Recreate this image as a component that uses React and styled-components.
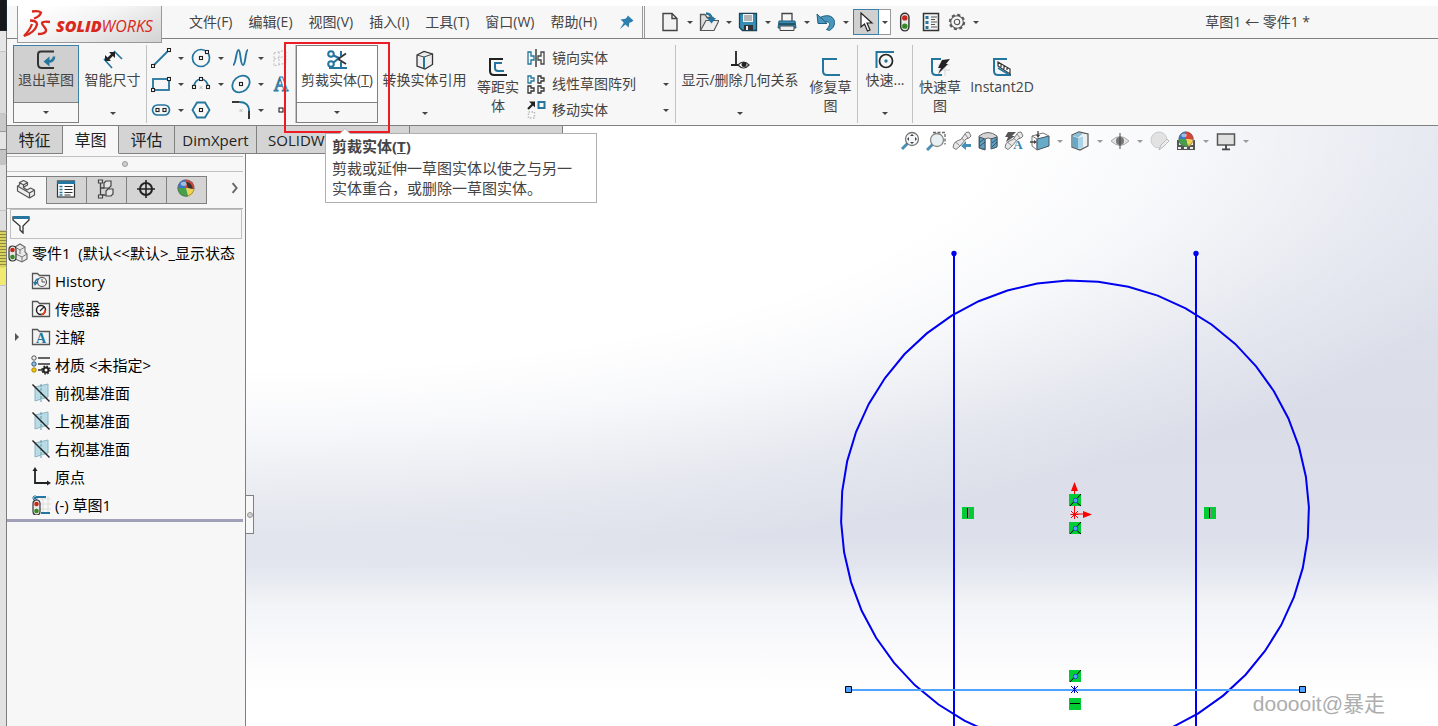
import styled, { createGlobalStyle, css } from 'styled-components';

const GlobalStyle = createGlobalStyle`
    * { box-sizing: border-box; }
    body {
        margin: 0;
        overflow: hidden;
        font-family: "Open Sans", "Noto Sans CJK SC", sans-serif;
        font-size: 14px;
        line-height: 20px;
        color: #444;
    }
    button {
        font: inherit;
        color: inherit;
        background: none;
        border: none;
        padding: 0;
        margin: 0;
        white-space: nowrap;
    }
    svg { display: block; flex: none; }
`;

const BLUE = '#24769f';
const DARK = '#333';

/* ---------- frame ---------- */

const Screen = styled.div`
    display: flex;
    height: 100vh;
    background: #fff;
`;

const Behind = styled.div`
    flex: none;
    display: flex;
    flex-direction: column;
    width: 7px;
    background: #dedede;
    overflow: hidden;
`;

const Slice = styled.div`
    flex: none;
    height: ${p => p.$h}px;
    background: ${p => p.$bg};
    border-right: 1px solid ${p => p.$edge || '#7d7d7d'};
    border-bottom: 1px solid ${p => p.$line || '#c4c4c4'};
`;

const Rest = styled.div`
    flex: 1;
    background: #e2e2e2;
    border-right: 1px solid #7d7d7d;
`;

const Window = styled.div`
    flex: 1;
    min-width: 0;
    display: flex;
    flex-direction: column;
    padding-top: 6px;
`;

/* ---------- menu bar ---------- */

const MenuBar = styled.header`
    flex: none;
    display: flex;
    align-items: center;
    height: 33px;
    padding-left: 10px;
    background: #f7f7f7;
    border-bottom: 1px solid #808080;
`;

const Logo = styled.div`
    position: relative;
    z-index: 2;
    align-self: flex-start;
    display: flex;
    align-items: center;
    gap: 5px;
    flex: none;
    width: 145px;
    height: 37px;
    padding-left: 5px;
    background: linear-gradient(160deg, #fff 10%, #f4f4f4 45%, #d2d2d2 100%);
    border: 1px solid #999;
    border-top: none;
    color: #d9291c;
    font-family: "Open Sans", sans-serif;
    font-size: 16px;
    font-style: italic;
    line-height: 20px;
    b { font-weight: 800; }
    span { padding-top: 4px; }
`;

const Menus = styled.nav`
    display: flex;
    gap: 16px;
    padding-left: 27px;
`;

const MenuItem = styled.button`
    line-height: 24px;
`;

const PinButton = styled.button`
    margin-left: 22px;
`;

const QuickTools = styled.div`
    display: flex;
    align-items: center;
    align-self: stretch;
    margin-left: 7px;
    padding-left: 13px;
    border-left: 3px double #999;
`;

const IconButton = styled.button`
    display: flex;
    align-items: center;
    justify-content: center;
    width: ${p => p.$w || 24}px;
    height: 26px;
`;

const Drop = styled.button`
    display: flex;
    align-items: center;
    justify-content: center;
    width: ${p => p.$w || 15}px;
    height: 26px;
    &::after {
        content: "";
        border: 3px solid transparent;
        border-top-color: ${p => p.$light ? '#999' : '#444'};
        border-bottom: none;
    }
`;

const SelectGroup = styled.div`
    display: flex;
    ${IconButton} { background: #d0d0d0; border: 1px solid #3a80a8; }
    ${Drop} { background: #fff; border: 1px solid #999; border-left: none; }
`;

const DocTitle = styled.div`
    margin-left: auto;
    padding-right: 128px;
    white-space: nowrap;
`;

/* ---------- ribbon ---------- */

const Ribbon = styled.div`
    position: relative;
    z-index: 1;
    flex: none;
    display: flex;
    height: 87px;
    padding: 6px 0 2px 6px;
    background: #f7f7f7;
    border-bottom: 1px solid #808080;
`;

const Rule = styled.div`
    flex: none;
    width: 1px;
    background: #c2c2c2;
`;

const BigButton = styled.button`
    flex: 1;
    display: flex;
    flex-direction: column;
    align-items: center;
    justify-content: flex-start;
    padding-top: ${p => p.$tall ? 12 : 5}px;
    line-height: 19px;
    white-space: normal;
    span { white-space: ${p => p.$tall ? 'normal' : 'nowrap'}; }
`;

const BigTool = styled.div`
    position: relative;
    flex: none;
    display: flex;
    flex-direction: column;
    width: ${p => p.$w}px;
    height: 78px;
    ${p => p.$framed && css`
        border: 1px solid #808080;
        > ${BigButton} {
            padding-top: 4px;
            background: #fff;
        }
    `}
    ${p => p.$pressed && css`
        > ${BigButton} {
            background: #d0d0d0;
            box-shadow: 0 0 0 1px #3a80a8;
        }
    `}
`;

const WrapLabel = styled.span`
    width: ${p => p.$w || 46}px;
    padding: 0 2px;
    text-align: center;
`;

const BigDrop = styled(Drop)`
    width: 100%;
    height: 20px;
    ${p => p.$line && css`border-top: 1px solid #808080;`}
`;

const ToolGrid = styled.div`
    flex: none;
    display: grid;
    grid-template-columns: 40px 40px 40px 26px;
    grid-auto-rows: 26px;
    padding-left: 2px;
`;

const Cell = styled.div`
    display: flex;
`;

const ListTools = styled.div`
    flex: none;
    width: 150px;
`;

const ListRow = styled.div`
    display: flex;
    justify-content: space-between;
    height: 26px;
    padding-right: 2px;
`;

const ListButton = styled.button`
    display: flex;
    align-items: center;
    gap: 6px;
    padding-left: 1px;
`;

const RedMark = styled.div`
    position: absolute;
    z-index: 3;
    left: -13px;
    top: -4px;
    width: 106px;
    height: 91px;
    border: 2px solid #ee1c25;
    pointer-events: none;
`;

const Tooltip = styled.div`
    position: absolute;
    z-index: 4;
    left: 28px;
    top: 87px;
    width: 272px;
    height: 70px;
    padding: 2px 20px 2px 6px;
    background: #fff;
    border: 1px solid #b0b0b0;
    font-size: 15px;
    line-height: 20px;
    h2 {
        margin: 0 0 1px;
        font-size: 15px;
        line-height: 21px;
    }
    p { margin: 0; }
    &::before {
        content: "";
        position: absolute;
        left: 13px;
        top: -6px;
        border: 6px solid transparent;
        border-top: none;
        border-bottom-color: #b8b8b8;
    }
    &::after {
        content: "";
        position: absolute;
        left: 14px;
        top: -5px;
        border: 5px solid transparent;
        border-top: none;
        border-bottom-color: #fff;
    }
`;

/* ---------- workspace ---------- */

const Workspace = styled.main`
    flex: 1;
    min-height: 0;
    display: flex;
    flex-direction: column;
    background:
        radial-gradient(ellipse 94% 74% at 17% 0%, #fff 0%, #fff 55%, rgba(255,255,255,0.8) 68%, rgba(255,255,255,0.3) 86%, rgba(255,255,255,0) 100%),
        linear-gradient(to bottom, #dee2ec 0%, #dadde8 50%, #dde0ea 68%, #e2e5ee 73%, #f2f4f7 80%, #fafafc 87%, #fff 95%);
`;

const TopRow = styled.div`
    flex: none;
    display: flex;
    justify-content: space-between;
    height: 28px;
`;

const Tabs = styled.div`
    display: flex;
`;

const Tab = styled.button`
    width: ${p => p.$w}px;
    overflow: hidden;
    padding: ${p => p.$left ? '0 0 0 11px' : 0};
    text-align: ${p => p.$left ? 'left' : 'center'};
    font-size: ${p => p.$latin ? 15 : 16}px;
    color: #222;
    background: ${p => p.$on ? '#f7f7f7' : '#d4d4d4'};
    border-right: 1px solid #808080;
    border-bottom: 1px solid ${p => p.$on ? '#f7f7f7' : '#808080'};
`;

const ViewTools = styled.div`
    display: flex;
    align-items: center;
    padding: 2px 185px 0 0;
`;

const Body = styled.div`
    flex: 1;
    min-height: 0;
    display: flex;
`;

const Side = styled.aside`
    flex: none;
    display: flex;
    flex-direction: column;
    width: 239px;
    padding-right: 2px;
    background: #f7f7f7;
    border-right: 1px solid #808080;
`;

const Grip = styled.div`
    display: flex;
    align-items: center;
    justify-content: center;
    height: 16px;
    margin: 2px 0 4px;
    border: solid #c0c0c0;
    border-width: 1px 0;
`;

const Dot = styled.i`
    width: 6px;
    height: 6px;
    border-radius: 50%;
    border: 1px solid #999;
    background: #d0d0d0;
`;

const PanelTabs = styled.div`
    display: flex;
    height: 33px;
    border-bottom: 1px solid #b0b0b0;
`;

const PanelTab = styled.button`
    display: flex;
    align-items: center;
    justify-content: center;
    width: 40px;
    height: 28px;
    padding: 0 2px 3px 0;
    background: ${p => p.$on ? 'none' : '#d4d4d4'};
    border: ${p => p.$on ? 'none' : '1px solid #808080'};
    border-left: none;
    border-top: 1px solid #808080;
    ${p => p.$on && css`border-right: 1px solid #808080;`}
`;

const More = styled.button`
    margin-left: auto;
    align-self: flex-start;
    height: 24px;
`;

const Filter = styled.label`
    display: flex;
    align-items: center;
    height: 30px;
    margin: 0 1px 0 3px;
    border: 1px solid #c0c0c0;
    input {
        flex: 1;
        min-width: 0;
        height: 26px;
        border: none;
        outline: none;
        background: none;
    }
`;

const Tree = styled.ul`
    list-style: none;
    margin: 0;
    overflow: hidden;
    padding: 0;
    border-bottom: 3px solid #9f9fb8;
`;

const Node = styled.li`
    display: flex;
    align-items: center;
    height: 28px;
    padding-left: ${p => p.$root ? 1 : 24}px;
    gap: 4px;
    font-size: 15px;
    color: #000;
    white-space: pre;
`;

const Expander = styled.button`
    width: 16px;
    height: 20px;
    margin-left: -20px;
    &::after {
        content: "";
        display: block;
        width: 0;
        margin-left: 4px;
        border: 4px solid transparent;
        border-left-color: #555;
        border-right: none;
    }
`;

const SideHandle = styled.button`
    flex: none;
    align-self: flex-start;
    display: flex;
    align-items: center;
    justify-content: center;
    width: 8px;
    height: 39px;
    margin-top: 341px;
    background: #f7f7f7;
    border: 1px solid #808080;
    border-left: none;
`;

const Canvas = styled.section`
    position: relative;
    flex: 1;
    min-width: 0;
    display: flex;
    justify-content: flex-end;
    padding-right: 108px;
    overflow: hidden;
`;

const Watermark = styled.div`
    position: absolute;
    right: 53px;
    bottom: 8px;
    font-family: "Liberation Sans", "Noto Sans CJK SC", sans-serif;
    font-size: 21px;
    line-height: 28px;
    color: #adadad;
`;

/* ---------- icons ---------- */

const Sq = ({ x, y, s = 3 }) => <rect x={x - s / 2} y={y - s / 2} width={s} height={s} fill="#fff" stroke="#222" strokeWidth="1.1" />;

const Folder = () => <path d="M1.5 17.5v-15h5l2 2h10v13z" fill="#f2f2f2" stroke="#555" strokeWidth="1.3" />;

const Light = ({ x = 0, y = 0 }) => (
    <g transform={`translate(${x} ${y})`}>
        <rect x="1" y="1" width="7" height="15" rx="3.5" fill="#e9e9e9" stroke="#333" strokeWidth="1.2" />
        <circle cx="4.5" cy="5" r="2.3" fill="#c8281c" />
        <circle cx="4.5" cy="12" r="2.3" fill="#358a24" />
    </g>
);

const Ball = ({ cx = 10, cy = 9, r = 8 }) => (
    <g transform={`translate(${cx} ${cy}) scale(${r / 8})`}>
        <path d="M0 0V-8A8 8 0 0 0-8 0Z" fill="#3d78c4" />
        <path d="M0 0V-8A8 8 0 0 1 8 1Z" fill="#d8433a" />
        <path d="M0 0L8 1A8 8 0 0 1 2 8Z" fill="#f2d34f" />
        <path d="M0 0L2 8A8 8 0 0 1-8 0Z" fill="#45a049" />
        <ellipse cx="-2" cy="-4" rx="3" ry="2" fill="#fff" opacity=".5" />
        <circle r="7.6" stroke="#666" strokeWidth=".6" />
    </g>
);

const Telescope = () => (
    <>
        <path d="M14 1.500l3-.5 2 4-2 2-3 1-6 7-4 3.500-3-2 1-4 4-3 3-1z" fill="#e8e8e8" stroke="#777" />
        <path d="M9 7l4 3M3.500 11l4 3.500M13 3l3 4" stroke="#888" />
    </>
);

const shapes = {
    exit: <><path d="M18 1.500H5q-3 0-3 3V14q0 4 4 4h12" stroke={DARK} strokeWidth="2" /><path d="M18 6.500q0 5-6 5" stroke={BLUE} strokeWidth="2.600" /><path d="M7.500 11.500l6-5v10z" fill={BLUE} /></>,
    smart: <><path d="M1 9l8 9M11 1l8 8M1 10l3-3" stroke={BLUE} strokeWidth="1.700" /><path d="M4 10l7-7" stroke="#222" strokeWidth="2.500" /><path d="M12 2v6L6 2zM2 11V5l6 6z" fill="#222" /></>,
    line: <><path d="M2 18L18 2" stroke={BLUE} strokeWidth="1.8" /><Sq x={2} y={18} /><Sq x={18} y={2} /></>,
    circle: <><circle cx="10" cy="10" r="8.500" stroke={BLUE} strokeWidth="1.7" /><Sq x={10} y={10} /><Sq x={16} y={4} /></>,
    spline: <path d="M2 17c3 0 3-15 5.500-15S9 17 12 17s2-15 5-15" stroke={BLUE} strokeWidth="1.9" />,
    plane: <path d="M3 5l12-3v13L3 18zM8 4v13M3 11l12-3" stroke="#bbb" strokeDasharray="2 1.500" />,
    rect: <><rect x="2" y="5" width="16" height="11" stroke={BLUE} strokeWidth="1.8" /><Sq x={2} y={16} /><Sq x={18} y={5} /></>,
    arc: <><path d="M3 13a7 8 0 0 1 14 0" stroke={BLUE} strokeWidth="1.7" /><Sq x={10} y={5} /><Sq x={3} y={13} /><Sq x={17} y={13} /><path d="M8.500 12l3 3m0-3l-3 3" stroke="#bbb" /></>,
    ellipse: <><ellipse cx="10" cy="10" rx="9.500" ry="7.500" transform="rotate(-42 10 10)" stroke={BLUE} strokeWidth="1.8" /><Sq x={10} y={10} /></>,
    text: <text x="10" y="17" textAnchor="middle" fontFamily="Liberation Serif, serif" fontWeight="bold" fontSize="20" fill="#fff" stroke={BLUE} strokeWidth="1">A</text>,
    slot: <><rect x="1.500" y="5" width="17" height="10" rx="5" stroke={BLUE} strokeWidth="1.7" /><Sq x={6.5} y={10} /><Sq x={13.5} y={10} /></>,
    polygon: <><path d="M1.500 10L6 2.500h8l4.500 7.500-4.500 7.500H6z" stroke={BLUE} strokeWidth="1.8" /><Sq x={10} y={10} /></>,
    fillet: <><path d="M1 2h7" stroke="#222" strokeWidth="1.8" /><path d="M8 2q10 0 10 9" stroke={BLUE} strokeWidth="1.8" /><path d="M18 11v8" stroke="#222" strokeWidth="1.8" /><path d="M8.500 9l3 3m0-3l-3 3" stroke="#bbb" /></>,
    point: <Sq x={10} y={10} s={4} />,
    trim: <><circle cx="4" cy="4" r="2.800" stroke={BLUE} strokeWidth="2" /><circle cx="4" cy="14" r="2.800" stroke={BLUE} strokeWidth="2" /><path d="M6.500 5.500L12 8l-5.500 4.500" stroke={BLUE} strokeWidth="2.200" /><path d="M11 9l8-5.500M11 9l8 5" stroke="#333" strokeWidth="1.800" /><path d="M14 1v5M14 12v5M2 18h18" stroke={BLUE} strokeWidth="2" /></>,
    convert: <><path d="M2 5l7-3.500L17.500 4v10.500L10 19l-8-3z" fill="#eee" stroke="#333" strokeWidth="1.3" /><path d="M2 5l7 2 8.500-3" stroke="#444" /><path d="M9 7v11" stroke={BLUE} strokeWidth="2" /></>,
    offset: <><path d="M15 2H2v12q0 4 4 4h13" stroke="#222" strokeWidth="2" /><path d="M14 6H7v5q0 3 3 3h6" stroke={BLUE} strokeWidth="2" /></>,
    mirror: <><path d="M10 1v18" stroke="#222" strokeWidth="1.3" /><path d="M2 4h3v4h3v4H5v4H2z" stroke={BLUE} strokeWidth="1.3" /><path d="M18 4h-3v4h-3v4h3v4h3z" stroke="#444" strokeWidth="1.3" /></>,
    pattern: <><path d="M2 2h3v2h3v3H5v2H2z" stroke={BLUE} strokeWidth="1.3" /><path d="M12 2h3v2h3v3h-3v2h-3zM2 12h3v2h3v3H5v2H2zM12 12h3v2h3v3h-3v2h-3z" stroke="#333" strokeWidth="1.3" /></>,
    move: <><path d="M2 9l5-5" stroke="#222" strokeWidth="2.200" /><path d="M3 1.500h6v6z" fill="#222" /><rect x="12.500" y="2" width="6" height="6" stroke={BLUE} strokeWidth="2" /><rect x="2.500" y="12" width="6" height="6" stroke="#bbb" strokeDasharray="1.500 1.500" strokeWidth="1.500" /></>,
    relations: <><path d="M6 1v14M1 15h8" stroke="#222" strokeWidth="1.8" /><path d="M8 15q5.500-6 11 0q-5.500 6-11 0z" fill="#fff" stroke="#333" strokeWidth="1.200" /><circle cx="14" cy="14.500" r="2.500" fill="#222" /></>,
    repair: <path d="M16 2H2v12q0 4 4 4h13" stroke={BLUE} strokeWidth="2" />,
    snap: <><path d="M1.500 18V2H19" stroke={BLUE} strokeWidth="2" /><circle cx="11" cy="11" r="6.500" stroke="#222" strokeWidth="1.7" /><circle cx="11" cy="11" r="1.700" fill={BLUE} /></>,
    rapid: <><path d="M8 8h12M8 13h12M10 8v11M15 8v11" stroke="#d5d5d5" /><path d="M11 2H2v12q0 4 4 4h6" stroke={BLUE} strokeWidth="2" /><path d="M12 3l8-1-4 5h2L8 17l3-6H8z" fill="#222" /></>,
    instant: <><path d="M15 2H2v12q0 4 4 4h13" stroke={BLUE} strokeWidth="2" /><path d="M6 5l12 7v5L6 9zM9 7v3M12 9v3M15 10v3" fill="#fff" stroke="#333" strokeWidth="1.200" /><path d="M6 11l10 6" stroke={BLUE} strokeWidth="1.500" /></>,
    file: <path d="M3 1.500h9l5 5v12H3zM12 1.500v5h5" fill="#f2f2f2" stroke="#444" strokeWidth="1.400" />,
    open: <><path d="M1.500 18V2.500H6l2 3h6v4" fill="#ddd" stroke="#555" strokeWidth="1.300" /><path d="M1.500 18.500L7 8.500h13l-5 10z" fill="#eee" stroke="#555" strokeWidth="1.200" /><path d="M7 1.500q5 0 5.500 5" stroke={BLUE} strokeWidth="2.500" /><path d="M8 6h9l-4.500 5.500z" fill={BLUE} /></>,
    save: <><path d="M1.500 1.500h17v17h-14l-3-3z" fill="#358eb5" stroke="#1d4358" strokeWidth="1.300" /><rect x="5" y="2" width="10" height="8" fill="#f2f2f2" /><path d="M6 4h8M6 6h8M6 8h8" stroke="#777" /><rect x="6" y="13" width="9" height="5" fill="#333" /><rect x="8" y="14" width="2" height="4" fill="#eee" /></>,
    print: <><path d="M5 9V1.500h10V9" fill="#f5f5f5" stroke="#444" strokeWidth="1.300" /><path d="M2 9h16l1 7H1z" fill="#358eb5" stroke="#235e7c" /><path d="M3 14h14v4.500H3z" fill="#eee" stroke="#444" /><path d="M2 12h16" stroke="#1d4358" strokeWidth="1.500" /></>,
    undo: <><path d="M4 5.500c8-4 14.500-1 14.500 5 0 4-2 6-5 8l-3-1c5-5 4-9-4-7.500z" fill="#4a97bd" stroke="#1f5f80" /><path d="M1 2l1 9.500h9L1 2z" fill="#4a97bd" stroke="#1f5f80" /></>,
    cursor: <path d="M5 1v14l3.500-3 3 7 2.500-1-3-7h5z" fill="#fff" stroke="#222" strokeWidth="1.200" />,
    light: <g transform="translate(4.500 0) scale(1.18)"><Light /></g>,
    options: <><rect x="2.500" y="1.500" width="15" height="17" fill="#f2f2f2" stroke="#333" strokeWidth="1.500" /><path d="M4.500 4h3v3h-3zM4.500 9h3v3h-3zM4.500 14h3v3h-3z" fill={BLUE} /><path d="M10 5h6M10 10h6M10 15h6M10 7.500h4M10 12.500h4" stroke="#555" /></>,
    gear: <><circle cx="10" cy="10" r="8" stroke="#555" strokeWidth="2.200" strokeDasharray="3.500 2.780" /><circle cx="10" cy="10" r="7" fill="#f7f7f7" stroke="#555" strokeWidth="1.200" /><circle cx="10" cy="10" r="3" stroke="#555" strokeWidth="1.200" /></>,
    pin: <path d="M11 2l7 6-2 2-3 1-1 6-4-4-7 6 5-8-4-4 6-1 2-2z" fill="#2c7fae" />,
    zoomFit: <><path d="M2 18l6-6" stroke="#4c8fb5" strokeWidth="3" /><circle cx="12" cy="8" r="6.500" fill="#f4f6f8" stroke="#777" strokeWidth="1.300" /><path d="M12 3l2 2h-4zM12 13l2-2h-4zM7 8l2-2v4zM17 8l-2-2v4z" fill="#444" /></>,
    zoomArea: <><path d="M7 1.500h12v12" stroke="#666" strokeDasharray="3 1.500" strokeWidth="1.300" /><path d="M1 19l6-6" stroke="#4c8fb5" strokeWidth="3" /><circle cx="11" cy="9" r="6.500" fill="#e8f0f2" stroke="#888" strokeWidth="1.300" /></>,
    previous: <><Telescope /><path d="M19 13h-5v-3l-5 5 5 4v-3h5z" fill="#4590b8" /></>,
    section: <><path d="M1 5q9-7 18 0v10q-3 3-5 2V8q-4-2-7 0v11l-6-2z" fill="#d5d5d5" stroke="#666" /><path d="M1.500 6L7 8v10.500L1.500 17zM13 8l6-2v10l-6 2z" fill="#5f9fc0" stroke="#456" /><path d="M2 11l4-3M2 15l5-4M14 12l5-4M14 16l5-5" stroke="#234" strokeWidth=".7" /></>,
    annot: <><Telescope /><path d="M4 1h8L8 5h3l-9 6 2-5H1z" fill="#555" /><text x="14" y="18" textAnchor="middle" fontFamily="Liberation Serif, serif" fontWeight="bold" fontSize="13" fill="#3b83ad">A</text></>,
    orient: <><path d="M7 8l12-3v10L7 19z" fill="#67abc9" stroke="#456" /><path d="M2 5l5 3v11l-5-4zM2 5l11-3 6 3" stroke="#777" /><path d="M8 0v5M0 11h5" stroke="#444" strokeWidth="1.300" /><path d="M6 4h4L8 7zM4 9v4l3-2z" fill="#444" /></>,
    display: <><path d="M2 4l7-3 9 2v12l-8 4-8-3z" fill="#eee" stroke="#555" strokeWidth="1.200" /><path d="M2.500 5L8 7v11l-5.500-2.500z" fill="#65a8c8" /><path d="M8 7l5-1.500v11L8 18z" fill="#aad4e6" /><path d="M2.500 4.500L9 1.500l4 1L8 6.500z" fill="#8bc1d8" /></>,
    eye: <><path d="M1 10q9-9 18 0q-9 9-18 0z" fill="#e2e2e2" stroke="#aaa" /><circle cx="10" cy="10" r="4" fill="#777" /><path d="M10 2v16" stroke="#444" /></>,
    appearance: <><circle cx="9" cy="9" r="8" fill="#e2e2e2" stroke="#ccc" /><path d="M9 19l2-5 6-6 2 2-6 6z" fill="#eee" stroke="#bbb" /></>,
    scene: <><rect x="1" y="9" width="18" height="10" fill="#555" /><path d="M3 11h3v3H3zM14 11h3v3h-3zM2 16h3v2H2zM8 16h3v2H8zM14 16h3v2h-3z" fill="#eee" /><Ball cx={10} cy={8} r={7.5} /></>,
    monitor: <><rect x="1.500" y="3" width="17" height="11" fill="#e0e0e0" stroke="#555" strokeWidth="1.500" /><path d="M10 14v4M6 18.300h8" stroke="#444" strokeWidth="1.800" /></>,
    part: <path d="M1.500 7v5l12 7 5-3v-5l-4-2-3.500 2-3-2V8l3.500-2V3.500L7.500 1.500l-4 2V6zM3.500 3.500l4 2.500 4-2.500M7.500 6v3M1.500 7l12 7 5-3M13.500 14v5" fill="#efefef" stroke="#555" strokeWidth="1.200" strokeLinejoin="round" />,
    property: <><rect x="1.500" y="2" width="17" height="16" fill="#fff" stroke="#333" strokeWidth="1.200" /><path d="M1 3.500h18" stroke={BLUE} strokeWidth="3" /><path d="M3.500 7.500h3M3.500 10.500h3M3.500 13.500h3M3.500 16h3" stroke={BLUE} strokeWidth="1.700" /><path d="M8.500 7.500h8M8.500 10.500h8M8.500 13.500h8M8.500 16h6" stroke="#333" /></>,
    config: <><path d="M4.500 2v16M4.500 9h4M4.500 16h5" stroke="#444" strokeWidth="1.300" /><path d="M2.500 1h4v3h-4zM2.500 16h4v3h-4zM8 4l2-2h5v5l-2 2H8zM10 12l2-2h5v5l-2 2h-5z" fill="#e5e5e5" stroke="#444" strokeWidth="1.200" /></>,
    target: <><circle cx="10" cy="10" r="6" stroke="#222" strokeWidth="2" /><path d="M10 1v18M1 10h18" stroke="#222" strokeWidth="1.600" /></>,
    ball: <><Ball r={8.5} /><path d="M10 3q5-1 7 7l-5-1z" fill="#333" /></>,
    filter: <><path d="M2 3h16v3l-6 6v7l-3-3v-4L2 6z" fill="#fff" stroke="#333" strokeWidth="1.300" /><path d="M2 3.500h16" stroke={BLUE} strokeWidth="3" /></>,
    root: <><path d="M7 4l5-3 5 3v5l2 2v5l-5 3-7-3z" fill="#eaeaea" stroke="#666" strokeWidth="1.100" /><path d="M7 4l5 3 5-3M12 7v4M8 11l6 3 5-3M14 14v5" stroke="#777" /><Light y={2} /></>,
    history: <><Folder /><circle cx="11" cy="11" r="4.500" stroke="#555" strokeWidth="1.200" /><path d="M11 8v3h3" stroke="#555" /><path d="M4 13q0-5 4-5" stroke={BLUE} strokeWidth="1.500" /><path d="M2 11h5l-3 4z" fill={BLUE} /></>,
    sensor: <><Folder /><circle cx="10" cy="11" r="4.500" fill="#fff" stroke="#222" strokeWidth="1.500" /><path d="M9 12l4-4" stroke="#222" strokeWidth="1.300" /><path d="M14 11q0 4-4 4.500" stroke="#e04a20" strokeWidth="2" /></>,
    note: <><Folder /><text x="10" y="16" textAnchor="middle" fontFamily="Liberation Serif, serif" fontWeight="bold" fontSize="14" fill={BLUE}>A</text></>,
    material: <><path d="M7 3h12M7 9h12M7 15h6" stroke="#333" strokeWidth="1.600" /><circle cx="3" cy="3" r="2.200" fill="#eee" stroke="#555" /><circle cx="3" cy="9" r="2.200" fill="#8cc8e4" stroke="#357" /><circle cx="3" cy="15" r="2.200" fill="#f4c30c" stroke="#a80" /><circle cx="15" cy="15" r="2.500" fill="#fff" stroke="#222" strokeWidth="2" /><circle cx="15" cy="15" r="4" stroke="#222" strokeWidth="1.300" strokeDasharray="1.600 1.540" /></>,
    datum: <><path d="M4 4l13-3v13L4 18z" fill="#b9dbe6" stroke="#8cb4c4" /><path d="M10 1v18" stroke="#69a" strokeDasharray="3 1" /><path d="M1.500 1.500l17 17" stroke="#222" strokeWidth="1.500" /></>,
    origin: <><path d="M4 3v13h13" stroke="#222" strokeWidth="1.800" /><path d="M4 0l2.500 4h-5zM20 16l-4-2.500v5z" fill="#222" /></>,
    sketch: <><path d="M9 4h11M9 9h11M9 14h11M12 1v18M17 1v18" stroke="#ddd" /><path d="M5 2h10M10 18h9" stroke={BLUE} strokeWidth="1.800" /><path d="M4 0v6M1 3h6M2 1l4 4M6 1l-4 4" stroke={BLUE} /><Light y={4} x={1} /></>,
    chevron: <path d="M7 4l5 6-5 6" stroke="#666" strokeWidth="2.400" />,
};

const Icon = ({ name, size = 20 }) => (
    <svg width={size} height={size} viewBox="0 0 20 20" fill="none" aria-hidden="true">{shapes[name]}</svg>
);

/* ---------- data ---------- */

const menus = ['文件(F)', '编辑(E)', '视图(V)', '插入(I)', '工具(T)', '窗口(W)', '帮助(H)'];
const fileTools = ['file', 'open', 'save', 'print', 'undo'];

const sketchTools = [
    ['line', true], ['circle', true], ['spline', true], ['plane', false],
    ['rect', true], ['arc', true], ['ellipse', true], ['text', false],
    ['slot', true], ['polygon', false], ['fillet', true], ['point', false],
];

const entityTools = [
    ['mirror', '镜向实体', false],
    ['pattern', '线性草图阵列', true],
    ['move', '移动实体', true],
];

const viewTools = [
    ['zoomFit', false], ['zoomArea', false], ['previous', false], ['section', false], ['annot', false],
    ['orient', true], ['display', true], ['eye', true], ['appearance', false], ['scene', true], ['monitor', true],
];

const nodes = [
    ['history', 'History'],
    ['sensor', '传感器'],
    ['note', '注解', true],
    ['material', '材质 <未指定>'],
    ['datum', '前视基准面'],
    ['datum', '上视基准面'],
    ['datum', '右视基准面'],
    ['origin', '原点'],
    ['sketch', '(-) 草图1'],
];

/* ---------- sketch drawing ---------- */

const SEGMENTS = 48;
const outline = Array.from({ length: SEGMENTS }, (_, i) => {
    const a = ((i * 360) / SEGMENTS - 1.8) * Math.PI / 180;
    return `${(1075 + 234 * Math.sin(a)).toFixed(1)},${(514.5 - 234 * Math.cos(a)).toFixed(1)}`;
}).join(' ');

const Relation = ({ x, y, kind }) => (
    <g transform={`translate(${x} ${y})`}>
        <rect width="12" height="12" fill="#00cc33" />
        {kind === 'v' && <path d="M5.500 1v10" stroke="#000" />}
        {kind === 'v' && <path d="M6.500 1v10" stroke="#888" />}
        {kind === 'h' && <path d="M1 5.500h10" stroke="#000" />}
        {kind === 'mid' && <path d="M1 12L12 0" stroke="#000" />}
        {kind === 'cross' && <path d="M1 12L12 0M6 7l6 5" stroke="#000" />}
        {(kind === 'mid' || kind === 'cross') && <circle cx="6.500" cy="6.500" r="2.300" fill="#4fa3ff" stroke="#1f50b8" />}
    </g>
);

const Sketch = () => (
    <svg width="500" height="572" viewBox="830 154 500 572" fill="none" overflow="visible">
        <polygon points={outline} stroke="#0000f0" strokeWidth="2" />
        <path d="M954 254v800M1196 254v800" stroke="#0000f0" strokeWidth="2" />
        <circle cx="954" cy="253.500" r="2.700" fill="#0000f0" />
        <circle cx="1196" cy="253.500" r="2.700" fill="#0000f0" />
        <path d="M849 690h453" stroke="#4fa3ff" strokeWidth="2" />
        <path d="M845.500 686.500h6v6h-6zM1299.500 686.500h6v6h-6z" fill="#4fa3ff" stroke="#000" />
        <path d="M1074.500 488v26h12" stroke="#f00" />
        <path d="M1074.500 482l3.500 9h-7zM1092 514.500l-9-3.500v7z" fill="#f00" />
        <path d="M1071 511l7 7M1078 511l-7 7M1070.500 514.500h8M1074.500 510v9" stroke="#f00" />
        <path d="M1071 686l7 7M1078 686l-7 7M1074.500 686v7" stroke="#0000c8" />
        <Relation x={962} y={507} kind="v" />
        <Relation x={1204} y={507} kind="v" />
        <Relation x={1069} y={494} kind="cross" />
        <Relation x={1069} y={522} kind="cross" />
        <Relation x={1069} y={670} kind="mid" />
        <Relation x={1069} y={698} kind="h" />
    </svg>
);

/* ---------- parts ---------- */

const TopMenu = () => (
    <MenuBar>
        <Logo>
            <svg width="28" height="28" viewBox="0 0 28 28" fill="none" stroke="#d9291c" strokeWidth="2.300">
                <path d="M9 1.500q7-1 9 1-1 4-7 6" />
                <path d="M7 10.500q7 0 7 4-2 8-13 11.500Q7 20 9 14" />
                <path d="M27 12q-7-1-8 1c0 3 5 5 4 8-1 2.500-3 3-8 3" />
            </svg>
            <span><b>SOLID</b>WORKS</span>
        </Logo>
        <Menus>
            {menus.map(m => <MenuItem key={m}>{m}</MenuItem>)}
        </Menus>
        <PinButton aria-label="固定"><Icon name="pin" size={16} /></PinButton>
        <QuickTools>
            {fileTools.map(t => (
                <Cell key={t}>
                    <IconButton aria-label={t}><Icon name={t} /></IconButton>
                    <Drop aria-label={`${t} menu`} />
                </Cell>
            ))}
            <SelectGroup>
                <IconButton $w={26} aria-label="select"><Icon name="cursor" /></IconButton>
                <Drop $w={12} aria-label="select menu" />
            </SelectGroup>
            <IconButton $w={27} aria-label="rebuild"><Icon name="light" /></IconButton>
            <IconButton $w={26} aria-label="properties"><Icon name="options" /></IconButton>
            <IconButton $w={26} aria-label="options"><Icon name="gear" size={18} /></IconButton>
            <Drop $w={12} aria-label="options menu" />
        </QuickTools>
        <DocTitle>草图1 ← 零件1 *</DocTitle>
    </MenuBar>
);

const Big = ({ icon, label, w, drop, tall, labelWidth, ...rest }) => (
    <BigTool $w={w} {...rest}>
        <BigButton $tall={tall}>
            <Icon name={icon} />
            {tall ? <WrapLabel $w={labelWidth}>{label}</WrapLabel> : <span>{label}</span>}
        </BigButton>
        {drop && <BigDrop $line={rest.$framed} aria-label={`${icon} menu`} />}
    </BigTool>
);

const SketchRibbon = () => (
    <Ribbon>
        <Big icon="exit" label="退出草图" w={66} drop $framed $pressed />
        <Big icon="smart" label="智能尺寸" w={67} drop />
        <Rule />
        <ToolGrid>
            {sketchTools.map(([name, drop]) => (
                <Cell key={name}>
                    <IconButton aria-label={name}><Icon name={name} /></IconButton>
                    {drop && <Drop aria-label={`${name} menu`} />}
                </Cell>
            ))}
        </ToolGrid>
        <Rule />
        <BigTool $w={82} $framed>
            <BigButton>
                <Icon name="trim" />
                <span>剪裁实体(<u>T</u>)</span>
            </BigButton>
            <BigDrop $line aria-label="trim menu" />
            <RedMark />
            <Tooltip role="tooltip">
                <h2>剪裁实体(<u>T</u>)</h2>
                <p>剪裁或延伸一草图实体以使之与另一实体重合，或删除一草图实体。</p>
            </Tooltip>
        </BigTool>
        <Big icon="convert" label="转换实体引用" w={93} drop />
        <Big icon="offset" label="等距实体" w={54} tall />
        <ListTools>
            {entityTools.map(([name, label, drop]) => (
                <ListRow key={name}>
                    <ListButton><Icon name={name} />{label}</ListButton>
                    {drop && <Drop aria-label={`${name} menu`} />}
                </ListRow>
            ))}
        </ListTools>
        <Rule />
        <Big icon="relations" label="显示/删除几何关系" w={128} drop />
        <Big icon="repair" label="修复草图" w={53} tall />
        <Rule />
        <Big icon="snap" label="快速..." w={54} drop />
        <Rule />
        <Big icon="rapid" label="快速草图" w={54} tall />
        <Big icon="instant" label="Instant2D" w={70} tall labelWidth={70} />
    </Ribbon>
);

const FeaturePanel = () => (
    <Side>
        <Grip><Dot /></Grip>
        <PanelTabs>
            <PanelTab $on aria-label="part"><Icon name="part" /></PanelTab>
            {['property', 'config', 'target', 'ball'].map(n => (
                <PanelTab key={n} aria-label={n}><Icon name={n} /></PanelTab>
            ))}
            <More aria-label="more"><Icon name="chevron" size={16} /></More>
        </PanelTabs>
        <Filter>
            <Icon name="filter" />
            <input aria-label="filter" />
        </Filter>
        <Tree>
            <Node $root><Icon name="root" />{'零件1  (默认<<默认>_显示状态'}</Node>
            {nodes.map(([icon, label, open]) => (
                <Node key={label}>
                    {open && <Expander aria-label="expand" />}
                    <Icon name={icon} />
                    {label}
                </Node>
            ))}
        </Tree>
    </Side>
);

const App = () => {
    return (
        <>
            <GlobalStyle />
            <Screen>
                <Behind>
                    <Slice $h={31} $bg="#15191e" $edge="#1c2733" $line="#222" />
                    <Slice $h={21} $bg="#e6e6e6" />
                    <Slice $h={62} $bg="#dcdcdc" />
                    <Slice $h={18} $bg="#c9c9c9" $line="#999" />
                    <Slice $h={18} $bg="#e4e4e4" $line="#888" />
                    <Slice $h={15} $bg="#c4c4c4" />
                    <Slice $h={46} $bg="#e2e2e2" />
                    <Slice $h={20} $bg="#dedede" />
                    <Slice $h={37} $bg="repeating-linear-gradient(#8f8a3a 0 1px, #d8d260 1px 3px)" $line="#e5df66" />
                    <Slice $h={18} $bg="#f0ea72" />
                    <Rest />
                </Behind>
                <Window>
                    <TopMenu />
                    <SketchRibbon />
                    <Workspace>
                        <TopRow>
                            <Tabs>
                                <Tab $w={56}>特征</Tab>
                                <Tab $w={56} $on>草图</Tab>
                                <Tab $w={56}>评估</Tab>
                                <Tab $w={82} $latin>DimXpert</Tab>
                                <Tab $w={153} $latin $left>SOLIDWORKS 插件</Tab>
                                <Tab $w={153} aria-label="more" />
                            </Tabs>
                            <ViewTools>
                                {viewTools.map(([name, drop]) => (
                                    <Cell key={name}>
                                        <IconButton $w={26} aria-label={name}><Icon name={name} /></IconButton>
                                        {drop && <Drop $light $w={14} aria-label={`${name} menu`} />}
                                    </Cell>
                                ))}
                            </ViewTools>
                        </TopRow>
                        <Body>
                            <FeaturePanel />
                            <SideHandle aria-label="collapse"><Dot /></SideHandle>
                            <Canvas>
                                <Sketch />
                                <Watermark>dooooit@暴走</Watermark>
                            </Canvas>
                        </Body>
                    </Workspace>
                </Window>
            </Screen>
        </>
    );
};

export default App;
